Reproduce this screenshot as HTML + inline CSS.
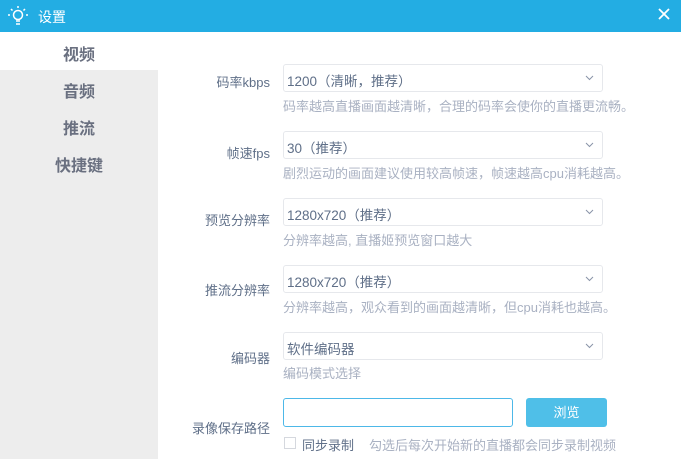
<!DOCTYPE html>
<html><head><meta charset="utf-8"><style>
*{margin:0;padding:0;box-sizing:border-box}
body{width:681px;height:459px;overflow:hidden;background:#fff;font-family:"Liberation Sans","Noto Sans CJK SC",sans-serif;position:relative}
.top{position:absolute;left:0;top:0;width:681px;height:32px;background:#23ade3;color:#fff}
.top .t{position:absolute;left:38px;top:7px;font-size:14px}
.side{position:absolute;left:0;top:70px;width:158px;height:389px;background:#ededed}
.nav{position:absolute;width:158px;text-align:center;font-size:16px;font-weight:bold;color:#6a7080}
.lab{position:absolute;right:411px;font-size:13px;color:#5f6f88;text-align:right;white-space:nowrap}
.sel{position:absolute;left:283px;width:320px;height:28px;border:1px solid #e6e8ec;border-radius:3px;font-size:13.5px;color:#5f6f88;padding:5px 0 0 3px}
.sel svg{position:absolute;right:8px;top:10px}
.hint{position:absolute;left:283px;font-size:13px;color:#a9b1c2;white-space:nowrap}
</style></head><body>
<div class="top">
<svg style="position:absolute;left:8px;top:5px" width="20" height="22" viewBox="0 0 20 22" fill="none" stroke="#fff" stroke-width="1.5"><circle cx="10" cy="10" r="4.5"/><path d="M8 16h4M8 19h4M10 1v2M3 4l1.5 1.5M17 4l-1.5 1.5M0 10h2M18 10h2"/></svg>
<div class="t">设置</div>
<svg style="position:absolute;left:658px;top:8px" width="12" height="12" viewBox="0 0 12 12" stroke="#fff" stroke-width="1.8"><path d="M1 1l10 10M11 1L1 11"/></svg>
</div>
<div class="side"></div>
<div class="nav" style="top:41px">视频</div>
<div class="nav" style="top:78px">音频</div>
<div class="nav" style="top:115px">推流</div>
<div class="nav" style="top:152px">快捷键</div>

<div class="lab" style="top:72px">码率kbps</div>
<div class="sel" style="top:64px">1200（清晰，推荐）<svg width="9" height="6" viewBox="0 0 9 6" fill="none" stroke="#8a94a8"><path d="M1 1l3.5 3.5L8 1"/></svg></div>
<div class="hint" style="top:96px">码率越高直播画面越清晰，合理的码率会使你的直播更流畅。</div>

<div class="lab" style="top:143px">帧速fps</div>
<div class="sel" style="top:131px">30（推荐）<svg width="9" height="6" viewBox="0 0 9 6" fill="none" stroke="#8a94a8"><path d="M1 1l3.5 3.5L8 1"/></svg></div>
<div class="hint" style="top:163px">剧烈运动的画面建议使用较高帧速，帧速越高cpu消耗越高。</div>

<div class="lab" style="top:210px">预览分辨率</div>
<div class="sel" style="top:198px">1280x720（推荐）<svg width="9" height="6" viewBox="0 0 9 6" fill="none" stroke="#8a94a8"><path d="M1 1l3.5 3.5L8 1"/></svg></div>
<div class="hint" style="top:230px">分辨率越高, 直播姬预览窗口越大</div>

<div class="lab" style="top:280px">推流分辨率</div>
<div class="sel" style="top:265px">1280x720（推荐）<svg width="9" height="6" viewBox="0 0 9 6" fill="none" stroke="#8a94a8"><path d="M1 1l3.5 3.5L8 1"/></svg></div>
<div class="hint" style="top:297px">分辨率越高，观众看到的画面越清晰，但cpu消耗也越高。</div>

<div class="lab" style="top:348px">编码器</div>
<div class="sel" style="top:332px">软件编码器<svg width="9" height="6" viewBox="0 0 9 6" fill="none" stroke="#8a94a8"><path d="M1 1l3.5 3.5L8 1"/></svg></div>
<div class="hint" style="top:363px">编码模式选择</div>

<div class="lab" style="top:418px">录像保存路径</div>
<div style="position:absolute;left:283px;top:398px;width:230px;height:29px;border:1px solid #4db8e8;border-radius:3px"></div>
<div style="position:absolute;left:526px;top:398px;width:81px;height:29px;background:#4fbfe8;border-radius:3px;color:#fff;font-size:13px;text-align:center;line-height:29px">浏览</div>
<div style="position:absolute;left:284px;top:437px;width:12px;height:12px;border:1px solid #d5d8de"></div>
<div style="position:absolute;left:302px;top:435px;font-size:13px;color:#5f6f88">同步录制</div>
<div class="hint" style="left:369px;top:435px">勾选后每次开始新的直播都会同步录制视频</div>
</body></html>
